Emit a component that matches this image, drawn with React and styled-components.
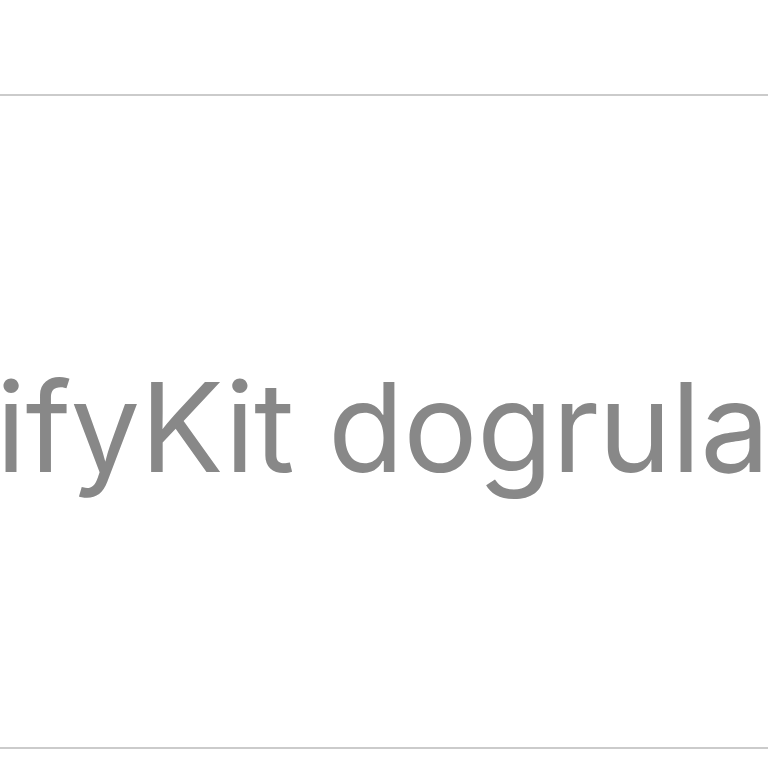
import React from "react";
import styled, { createGlobalStyle } from "styled-components";

const GlobalStyle = createGlobalStyle`
  html, body {
    margin: 0;
    padding: 0;
    background: #ffffff;
  }
  body {
    font-family: Inter, "Noto Sans", sans-serif;
  }
`;

const Page = styled.div`
  width: 768px;
  height: 768px;
  overflow: hidden;
  display: flex;
  flex-direction: column;
`;

const TopSpace = styled.div`
  height: 94px;
  flex-shrink: 0;
`;

const Row = styled.div`
  height: 655px;
  box-sizing: border-box;
  flex-shrink: 0;
  padding-top: 10px;
  border-top: 2px solid #cbcbcb;
  border-bottom: 2px solid #cbcbcb;
  display: flex;
  align-items: center;
  overflow: hidden;
`;

const Label = styled.span`
  font-size: 124px;
  line-height: 1;
  color: #888888;
  white-space: nowrap;
  margin-left: ${p => p.offset}px;
  letter-spacing: -0.7px;
`;

export default function App() {
  return (
    <>
      <GlobalStyle />
      <Page>
        <TopSpace />
        <Row>
          <Label offset={-202}>VerifyKit dogrulama</Label>
        </Row>
      </Page>
    </>
  );
}
